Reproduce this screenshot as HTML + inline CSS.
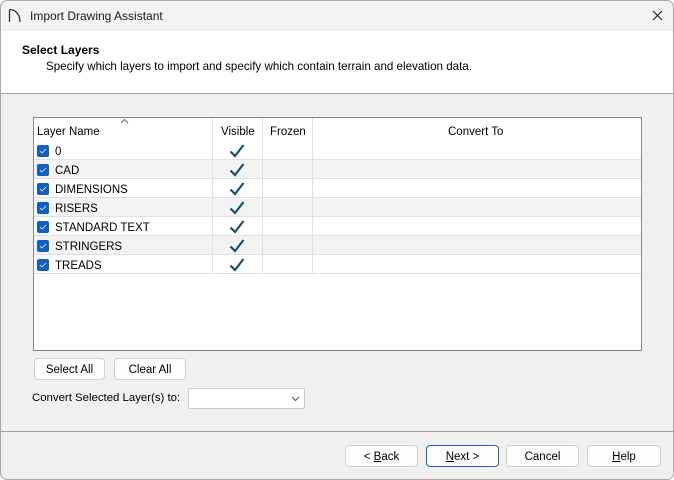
<!DOCTYPE html><html><head><style>
*{box-sizing:border-box;margin:0;padding:0}
body{width:674px;height:480px;background:#fff;font-family:"Liberation Sans",sans-serif;font-size:12px;color:#000;position:relative;overflow:hidden}
.win{position:absolute;left:0;top:0;width:674px;height:480px;border-radius:7px;overflow:hidden;background:#f0f0f0}
.frame{position:absolute;left:0;top:0;width:674px;height:480px;border:1px solid #a8a8a8;border-radius:7px;pointer-events:none}
.title{position:absolute;left:0;top:0;width:674px;height:31px;background:#f3f3f3}
.head{position:absolute;left:0;top:31px;width:674px;height:63px;background:#fff;border-bottom:1px solid #a0a0a0}
.a{position:absolute;white-space:nowrap}
.tbl{position:absolute;left:33px;top:117px;width:609px;height:234px;background:#fff;border:1px solid #828790}
.row{position:absolute;left:0;width:607px;height:19px;border-bottom:1px solid #e0e0e0}
.cb{position:absolute;left:3px;top:4px;width:12px;height:12px;background:#0f5fc5;border-radius:2px}
.btn{position:absolute;height:22px;background:#fdfdfd;border:1px solid #d0d0d0;border-radius:4px;text-align:center;line-height:22px;font-size:11.5px}
.vl{position:absolute;top:0;width:1px;background:#e0e0e0}
.rt{font-size:11.5px}
</style></head><body><div class="win">
<div class="title"><svg class="a" style="left:8px;top:8px" width="14" height="15" viewBox="0 0 14 15"><path d="M1.5 1.5V14M1.5 1.5C7 1.5 12 6 12 14" stroke="#333" stroke-width="1.3" fill="none"/></svg>
<div class="a" style="left:30px;top:9px;font-size:12px;color:#1a1a1a">Import Drawing Assistant</div>
<svg class="a" style="left:652px;top:10px" width="11" height="11"><path d="M1 1L10 10M10 1L1 10" stroke="#222" stroke-width="1.2"/></svg></div>
<div class="head"><div class="a" style="left:22px;top:12px;font-weight:bold">Select Layers</div>
<div class="a" style="left:46px;top:29px;font-size:11.6px">Specify which layers to import and specify which contain terrain and elevation data.</div></div>
<div class="tbl">
<div class="vl" style="left:178px;height:156px"></div><div class="vl" style="left:228px;height:156px"></div><div class="vl" style="left:278px;height:156px"></div>
<svg class="a" style="left:86px;top:0" width="9" height="6"><path d="M1 5L4.5 1.5L8 5" stroke="#666" fill="none"/></svg>
<div class="a rt" style="left:3px;top:8px">Layer Name</div><div class="a rt" style="left:187px;top:8px">Visible</div><div class="a rt" style="left:236px;top:8px">Frozen</div><div class="a rt" style="left:414px;top:8px">Convert To</div>
</div>
<div id="rows"></div>
<div class="btn" style="left:34px;top:358px;width:71px">Select All</div>
<div class="btn" style="left:114px;top:358px;width:72px">Clear All</div>
<div class="a" style="left:32px;top:392px;font-size:11.4px">Convert Selected Layer(s) to:</div>
<div class="a" style="left:188px;top:388px;width:117px;height:21px;background:#fff;border:1px solid #ccc;border-radius:2px"><svg style="position:absolute;left:102px;top:7px" width="9" height="6"><path d="M1 1L4.5 4.5L8 1" stroke="#555" fill="none"/></svg></div>
<div class="a" style="left:0;top:431px;width:674px;height:1px;background:#a0a0a0"></div>
<div class="btn" style="left:345px;top:445px;width:73px">&lt; <u>B</u>ack</div>
<div class="btn" style="left:426px;top:445px;width:73px;border:1px solid #1a66b8"><u>N</u>ext &gt;</div>
<div class="btn" style="left:506px;top:445px;width:73px">Cancel</div>
<div class="btn" style="left:587px;top:445px;width:74px"><u>H</u>elp</div>
</div><div class="frame"></div>
<script>
var n=["0","CAD","DIMENSIONS","RISERS","STANDARD TEXT","STRINGERS","TREADS"],h="";
n.forEach(function(t,i){h+='<div class="row" style="left:34px;top:'+(141+i*19)+'px;background:'+(i%2?'#f3f3f3':'#fff')+'"><div class="cb"><svg width="12" height="12" style="position:absolute"><path d="M3 6.2L5 8L9 4" stroke="#fff" stroke-width="0.8" fill="none"/></svg></div><div class="a rt" style="left:21px;top:5px">'+t+'</div><div class="vl" style="left:178px;height:19px"></div><div class="vl" style="left:228px;height:19px"></div><div class="vl" style="left:278px;height:19px"></div><svg class="a" style="left:195px;top:2px" width="16" height="16"><path d="M1.5 8.5L6 13L14.5 2" stroke="#17506b" stroke-width="2.2" fill="none"/></svg></div>'});
document.getElementById("rows").innerHTML=h;
</script></body></html>
